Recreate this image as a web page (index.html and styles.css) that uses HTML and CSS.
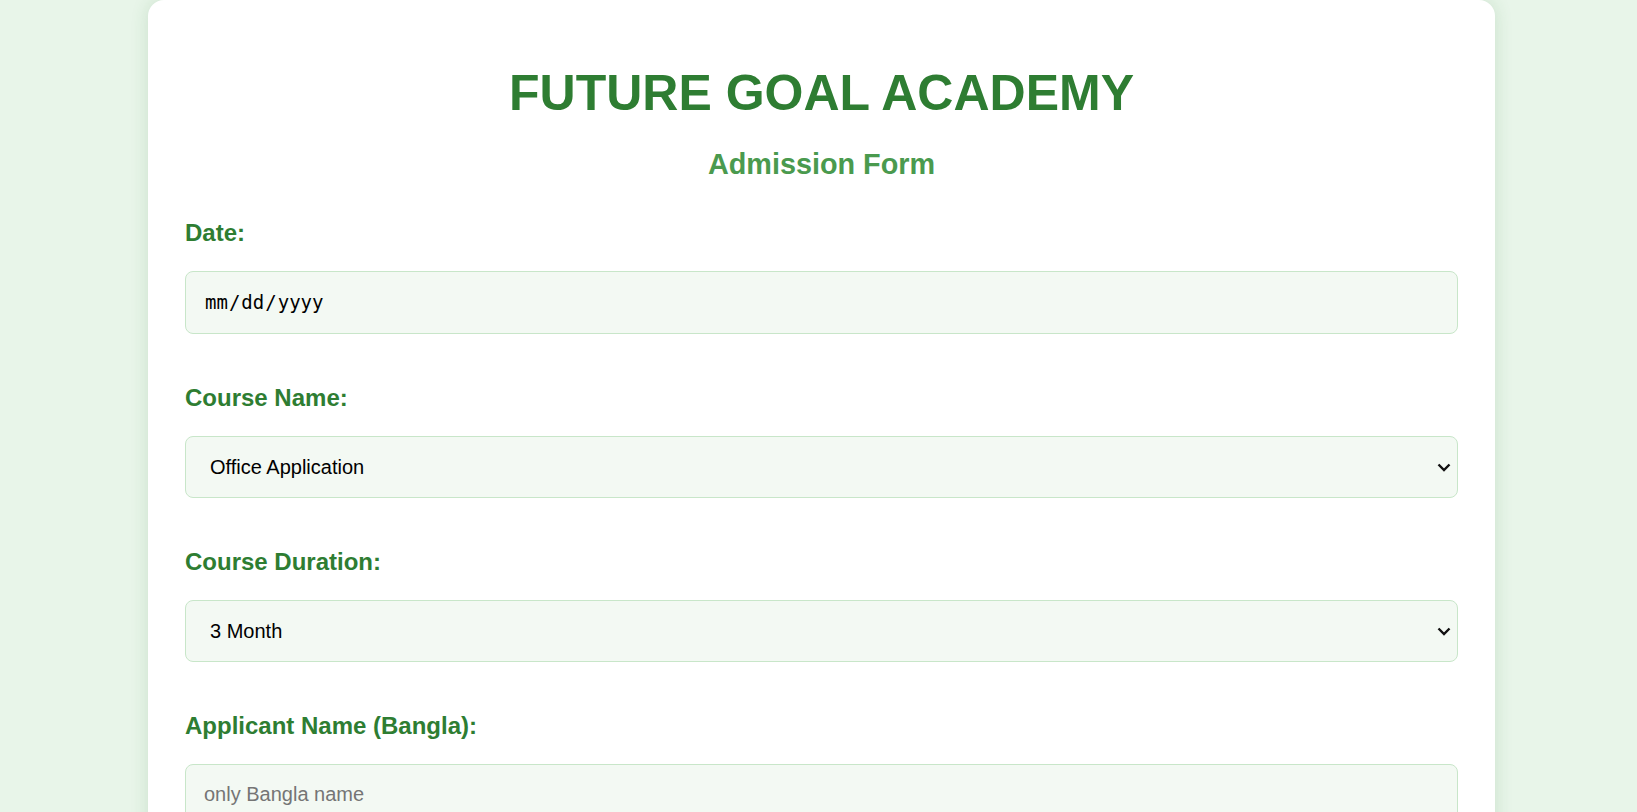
FILE: index.html
```html
<!DOCTYPE html>
<html lang="en">
<head>
<meta charset="utf-8">
<title>Future Goal Academy - Admission Form</title>
<link rel="stylesheet" href="styles.css">
</head>
<body>
<main class="card">
  <h1 class="title">FUTURE GOAL ACADEMY</h1>
  <h2 class="subtitle">Admission Form</h2>
  <form class="form">
    <div class="field">
      <label class="label" for="date">Date:</label>
      <input class="control control-date" type="date" id="date">
    </div>
    <div class="field">
      <label class="label" for="course">Course Name:</label>
      <div class="select-wrap">
        <select class="control control-select" id="course">
          <option>Office Application</option>
          <option>Graphic Design</option>
          <option>Web Design</option>
        </select>
        <svg class="chevron" width="14" height="9" viewBox="0 0 14 9" aria-hidden="true"><path d="M1.5 1.5 L7 7 L12.5 1.5" fill="none" stroke="#111" stroke-width="2.4"/></svg>
      </div>
    </div>
    <div class="field">
      <label class="label" for="duration">Course Duration:</label>
      <div class="select-wrap">
        <select class="control control-select" id="duration">
          <option>3 Month</option>
          <option>6 Month</option>
        </select>
        <svg class="chevron" width="14" height="9" viewBox="0 0 14 9" aria-hidden="true"><path d="M1.5 1.5 L7 7 L12.5 1.5" fill="none" stroke="#111" stroke-width="2.4"/></svg>
      </div>
    </div>
    <div class="field">
      <label class="label" for="bname">Applicant Name (Bangla):</label>
      <input class="control" type="text" id="bname" placeholder="only Bangla name">
    </div>
  </form>
</main>
</body>
</html>
```

FILE: styles.css
```css
html, body {
  margin: 0;
  padding: 0;
}

body {
  background: #e8f5e9;
  font-family: "Liberation Sans", Arial, sans-serif;
}

.card {
  box-sizing: border-box;
  width: 1347px;
  margin: 0 0 0 148px;
  padding: 64px 37px 40px;
  background: #ffffff;
  border-radius: 16px;
  box-shadow: 0 0 18px rgba(46, 125, 50, 0.16);
}

.title {
  margin: 0;
  font-size: 50px;
  font-weight: bold;
  line-height: normal;
  color: #2e7d32;
  text-align: center;
}

.subtitle {
  margin: 26px 0 0;
  font-size: 28.8px;
  font-weight: bold;
  line-height: normal;
  color: #4a9a4e;
  text-align: center;
}

.form {
  margin-top: 38px;
}

.field {
  display: flex;
  flex-direction: column;
  gap: 24px;
  margin-bottom: 50px;
}

.label {
  font-size: 24px;
  font-weight: bold;
  line-height: normal;
  color: #2e7d32;
}

.control {
  box-sizing: border-box;
  width: 100%;
  margin: 0;
  padding: 18px;
  font-family: "Liberation Sans", Arial, sans-serif;
  font-size: 20px;
  line-height: 23px;
  color: #000;
  background: #f3f9f3;
  border: 1px solid #c8e6c9;
  border-radius: 8px;
  outline: none;
}

.control::placeholder {
  color: #757575;
}

.control-date {
  height: 63px;
  font-family: "DejaVu Sans Mono", "Liberation Mono", monospace;
  font-size: 19px;
}

.control-date::-webkit-calendar-picker-indicator {
  display: none;
}

.select-wrap {
  position: relative;
}

.control-select {
  display: block;
  height: 62px;
  padding-left: 24px;
  -webkit-appearance: none;
  appearance: none;
}

.chevron {
  position: absolute;
  right: 7px;
  top: 27px;
  pointer-events: none;
}
```
